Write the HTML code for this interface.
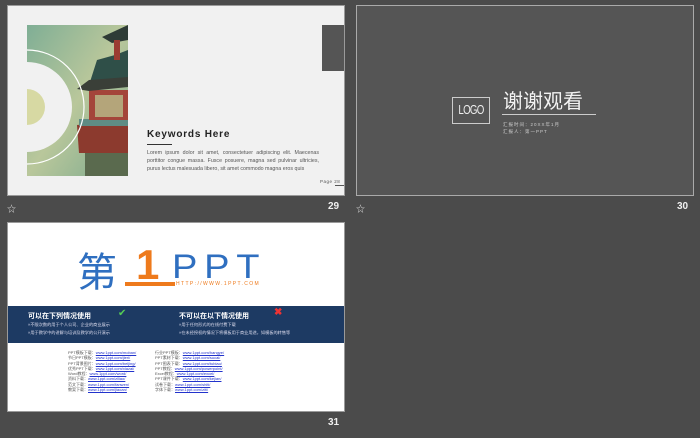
<!DOCTYPE html>
<html><head><meta charset="utf-8"><style>
*{margin:0;padding:0;box-sizing:border-box}
body{width:700px;height:438px;background:#4b4b4b;position:relative;overflow:hidden;font-family:"Liberation Sans","Noto Sans CJK SC",sans-serif}
.a{position:absolute}
.s{position:absolute;border:1px solid #9a9a9a}
.num{position:absolute;color:#f0f0f0;font-size:10px;font-weight:bold}
.ic{position:absolute;color:#ddd;font-size:9px}
.lk{color:#2233cc;text-decoration:underline}
</style></head><body>
<!-- slide 29 -->
<div class="s" style="left:7px;top:5px;width:338px;height:191px;background:#f1f1f1;overflow:hidden">
 <svg class="a" style="left:19px;top:19px" width="101" height="151" viewBox="0 0 101 151">
  <defs><linearGradient id="g" x1="0" y1="0" x2="1" y2="1"><stop offset="0" stop-color="#7fae95"/><stop offset=".5" stop-color="#b9c79b"/><stop offset="1" stop-color="#7aa98e"/></linearGradient></defs>
  <rect width="101" height="151" fill="url(#g)"/>
  <path d="M58 151 L58 110 L101 105 L101 151Z" fill="#5a6a4e"/>
  <path d="M50 100 L101 95 L101 128 L52 128Z" fill="#8c3a2e"/>
  <rect x="52" y="94" width="49" height="7" fill="#5f8c84"/>
  <rect x="62" y="65" width="39" height="30" fill="#a4453a"/>
  <rect x="68" y="70" width="28" height="22" fill="#b4a57a"/>
  <path d="M62 60 L70 35 L88 30 L101 25 L101 62Z" fill="#2f4f48"/>
  <path d="M50 64 L62 55 L101 52 L101 62 L62 66Z" fill="#3a3f38"/>
  <path d="M75 12 L101 0 L101 15 L85 18Z" fill="#2e3b36"/>
  <rect x="87" y="15" width="6" height="20" fill="#9b3b32"/>
  <circle cx="0" cy="82" r="57" fill="none" stroke="#fff" stroke-width="1.2"/>
  <circle cx="0" cy="82" r="45" fill="#f1f1f1"/>
  <circle cx="0" cy="82" r="18" fill="#d7d9a3"/>
 </svg>
 <div class="a" style="left:314px;top:19px;width:24px;height:46px;background:#555"></div>
 <div class="a" style="left:139px;top:123px;font-size:10px;font-weight:bold;color:#222;letter-spacing:.8px">Keywords Here</div>
 <div class="a" style="left:139px;top:138px;width:25px;height:1px;background:#333"></div>
 <div class="a" style="left:139px;top:143px;width:172px;font-size:5.3px;line-height:8.2px;color:#555;text-align:justify">Lorem ipsum dolor sit amet, consectetuer adipiscing elit. Maecenas porttitor congue massa. Fusce posuere, magna sed pulvinar ultricies, purus lectus malesuada libero, sit amet commodo magna eros quis</div>
 <div class="a" style="left:312px;top:173px;font-size:4.5px;color:#555;letter-spacing:.5px">Page 28</div>
 <div class="a" style="left:327px;top:179px;width:10px;height:1px;background:#555"></div>
</div>
<div class="ic" style="left:7px;top:202px">☆</div>
<div class="num" style="left:328px;top:201px">29</div>
<!-- slide 30 -->
<div class="s" style="left:356px;top:5px;width:338px;height:191px;background:#555;border-color:#aaa">
 <div class="a" style="left:95px;top:91px;width:38px;height:27px;border:1px solid #ccc"></div>
 <div class="a" style="left:97px;top:94px;width:34px;color:#eee;font-size:13px;text-align:center;line-height:20px;font-family:'Liberation Sans Narrow','Liberation Sans',sans-serif;letter-spacing:-1px;transform:scaleX(.75)">LOGO</div>
 <div class="a" style="left:146px;top:82px;font-size:20px;color:#f2f2f2;font-family:'Noto Sans CJK SC',sans-serif;line-height:24px">谢谢观看</div>
 <div class="a" style="left:145px;top:108px;width:94px;height:1px;background:#ccc"></div>
 <div class="a" style="left:146px;top:116px;font-size:4.5px;color:#ccc;line-height:6.5px;letter-spacing:1px">汇报时间：20XX年1月<br>汇报人：第一PPT</div>
</div>
<div class="ic" style="left:356px;top:202px">☆</div>
<div class="num" style="left:677px;top:201px">30</div>
<!-- slide 31 -->
<div class="s" style="left:7px;top:222px;width:338px;height:190px;background:#fff">
 <div class="a" style="left:69px;top:26px;font-size:40px;color:#2f6fc0;font-family:'Noto Sans CJK SC',sans-serif;line-height:40px">第</div>
 <div class="a" style="left:128px;top:20px;font-size:42px;font-weight:bold;color:#ee7a1c;line-height:44px">1</div>
 <div class="a" style="left:117px;top:59px;width:50px;height:4px;background:#ee7a1c"></div>
 <div class="a" style="left:164px;top:27px;font-size:34px;color:#2f6fc0;line-height:34px;letter-spacing:6px;transform:scaleX(1.12);transform-origin:left">PPT</div>
 <div class="a" style="left:168px;top:58px;font-size:5px;color:#ee7a1c;letter-spacing:1.4px">HTTP://WWW.1PPT.COM</div>
 <div class="a" style="left:0;top:83px;width:336px;height:37px;background:#1d3a63"></div>
 <div class="a" style="left:20px;top:88px;font-size:7px;color:#fff;font-weight:bold">可以在下列情况使用</div>
 <div class="a" style="left:110px;top:85px;font-size:10px;color:#5c5">✔</div>
 <div class="a" style="left:20px;top:98px;font-size:4.2px;color:#dde;line-height:7.5px">»不限次数的用于个人公司、企业的商业展示<br>»用于教学中的讲解与培训及教学的公开演示</div>
 <div class="a" style="left:171px;top:88px;font-size:7px;color:#fff;font-weight:bold">不可以在以下情况使用</div>
 <div class="a" style="left:266px;top:84px;font-size:10px;color:#e33;font-weight:bold">✖</div>
 <div class="a" style="left:171px;top:98px;font-size:4.2px;color:#dde;line-height:7.5px">»用于任何形式的在线付费下载<br>»在未经授权的情况下将模板用于商业用途，如模板的转售等</div>
 <div class="a" style="left:60px;top:127px;font-size:4px;color:#555;line-height:5.3px">PPT模板下载：<span class="lk">www.1ppt.com/moban/</span><br>节日PPT模板：<span class="lk">www.1ppt.com/jieri/</span><br>PPT背景图片：<span class="lk">www.1ppt.com/beijing/</span><br>优秀PPT下载：<span class="lk">www.1ppt.com/xiazai/</span><br>Word教程：<span class="lk">www.1ppt.com/word/</span><br>资料下载：<span class="lk">www.1ppt.com/ziliao/</span><br>范文下载：<span class="lk">www.1ppt.com/fanwen/</span><br>教案下载：<span class="lk">www.1ppt.com/jiaoan/</span></div>
 <div class="a" style="left:147px;top:127px;font-size:4px;color:#555;line-height:5.3px">行业PPT模板：<span class="lk">www.1ppt.com/hangye/</span><br>PPT素材下载：<span class="lk">www.1ppt.com/sucai/</span><br>PPT图表下载：<span class="lk">www.1ppt.com/tubiao/</span><br>PPT教程：<span class="lk">www.1ppt.com/powerpoint/</span><br>Excel教程：<span class="lk">www.1ppt.com/excel/</span><br>PPT课件下载：<span class="lk">www.1ppt.com/kejian/</span><br>试卷下载：<span class="lk">www.1ppt.com/shiti/</span><br>字体下载：<span class="lk">www.1ppt.com/ziti/</span></div>
</div>
<div class="num" style="left:328px;top:417px">31</div>
</body></html>
